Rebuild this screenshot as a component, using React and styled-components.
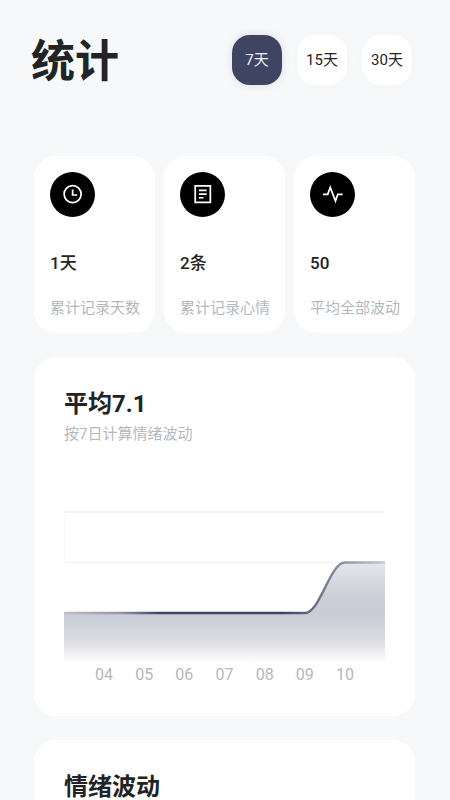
import React, { useState } from "react";
import styled, { createGlobalStyle } from "styled-components";

const ranges = [7, 15, 30];
const days = ["04", "05", "06", "07", "08", "09", "10"];

function ClockIcon() {
  return (
    <svg width="24" height="24" viewBox="0 0 24 24" aria-hidden="true">
      <circle cx="11.6" cy="11" r="9.3" />
      <path d="M11.6 6v6h5" />
    </svg>
  );
}

function NoteIcon() {
  return (
    <svg width="24" height="24" viewBox="0 0 24 24" aria-hidden="true">
      <path d="M3.5 2h16.5v18H3.5z" />
      <path d="M7.5 7h8.5M7.5 11h8.5M7.5 15h5" />
    </svg>
  );
}

function PulseIcon() {
  return (
    <svg width="24" height="24" viewBox="0 0 24 24" aria-hidden="true">
      <path d="M1 11.2h5.2L9 3.7l5.7 14.8L17.2 11.2H22.5" />
    </svg>
  );
}

const stats = [
  { icon: <ClockIcon />, value: "1天", label: "累计记录天数" },
  { icon: <NoteIcon />, value: "2条", label: "累计记录心情" },
  { icon: <PulseIcon />, value: "50", label: "平均全部波动" },
];

function MoodChart() {
  return (
    <ChartContainer>
      <svg viewBox="0 0 321 152" role="img" aria-label="情绪波动">
        <defs>
          <linearGradient id="area" x1="0" y1="51" x2="0" y2="152" gradientUnits="userSpaceOnUse">
            <stop offset="0" stopColor="#e6e7ea" />
            <stop offset="0.35" stopColor="#cccdd7" />
            <stop offset="0.5" stopColor="#c9ccd6" />
            <stop offset="0.62" stopColor="#cdd1d9" />
            <stop offset="0.8" stopColor="#dfe0e5" />
            <stop offset="1" stopColor="#ffffff" />
          </linearGradient>
          <linearGradient id="line" x1="0" y1="0" x2="321" y2="0" gradientUnits="userSpaceOnUse">
            <stop offset="0" stopColor="#bfc1c9" />
            <stop offset="0.18" stopColor="#8f93a5" />
            <stop offset="0.3" stopColor="#40435f" />
            <stop offset="0.68" stopColor="#40435f" />
            <stop offset="0.85" stopColor="#898b9f" />
            <stop offset="1" stopColor="#c6c7d0" />
          </linearGradient>
        </defs>
        <path d="M0 1H321" stroke="#f3f4f5" strokeWidth="2" />
        <path d="M0 51.5H321" stroke="#f1f1f3" />
        <path d="M0.5 1V51" stroke="#fafafa" />
        <path
          d="M0 102H241C256 102 266 51.5 281 51.5H321V152H0Z"
          fill="url(#area)"
        />
        <path
          d="M0 102H241C256 102 266 51.5 281 51.5H321"
          fill="none"
          stroke="url(#line)"
          strokeWidth="2.5"
        />
      </svg>
      <ol>
        {days.map((day) => (
          <li key={day}>{day}</li>
        ))}
      </ol>
    </ChartContainer>
  );
}

function App() {
  const [range, setRange] = useState(7);

  return (
    <Page>
      <GlobalStyle />
      <Header>
        <h1>统计</h1>
        <div className="ranges">
          {ranges.map((item) => (
            <RangeButton
              key={item}
              type="button"
              $active={item === range}
              aria-pressed={item === range}
              onClick={() => setRange(item)}
            >
              {item}天
            </RangeButton>
          ))}
        </div>
      </Header>
      <Main>
        <StatList>
          {stats.map((stat) => (
            <StatCard key={stat.label}>
              <div className="icon">{stat.icon}</div>
              <p className="value">{stat.value}</p>
              <p className="label">{stat.label}</p>
            </StatCard>
          ))}
        </StatList>
        <Panel>
          <h2>平均7.1</h2>
          <p>按7日计算情绪波动</p>
          <MoodChart />
        </Panel>
        <Panel>
          <h2>情绪波动</h2>
        </Panel>
      </Main>
    </Page>
  );
}

////////////////////////////////////////////Styled-Components
const GlobalStyle = createGlobalStyle`
  * {
    box-sizing: border-box;
  }

  html {
    scrollbar-width: none;
  }

  body {
    margin: 0;
    background-color: #f6f8fa;
    color: #222325;
    font-family: Roboto, "Noto Sans CJK SC", sans-serif;
  }

  h1, h2, p, ol, ul {
    margin: 0;
    padding: 0;
    list-style: none;
  }

  button {
    font-family: inherit;
  }
`;

const Page = styled.div`
  padding-bottom: 24px;
`;

const Header = styled.header`
  display: flex;
  align-items: center;
  justify-content: space-between;
  padding: 28px 38px 0 31px;

  h1 {
    padding-top: 4px;
    font-size: 44px;
    line-height: 60px;
    font-weight: 700;
  }

  .ranges {
    display: flex;
    gap: 15px;
  }
`;

const RangeButton = styled.button`
  width: 50px;
  height: 50px;
  padding: 0;
  border: none;
  border-radius: 18px;
  background-color: ${(props) => (props.$active ? "#404463" : "#fff")};
  color: ${(props) => (props.$active ? "#f1f1f5" : "#222325")};
  box-shadow: 0 0 8px
    ${(props) => (props.$active ? "rgba(64, 68, 99, 0.14)" : "rgba(64, 68, 99, 0.02)")};
  font-size: 15px;
  line-height: 24px;
  cursor: pointer;
`;

const Main = styled.main`
  display: flex;
  flex-direction: column;
  gap: 24px;
  padding: 64px 35px 0 34px;
`;

const StatList = styled.ul`
  display: grid;
  grid-template-columns: repeat(3, 1fr);
  gap: 9px;
`;

const StatCard = styled.li`
  padding: 16px 0 13px 16px;
  border-radius: 22px;
  background-color: #fff;
  white-space: nowrap;

  .icon {
    display: flex;
    align-items: center;
    justify-content: center;
    width: 45px;
    height: 45px;
    border-radius: 50%;
    background-color: #000;
  }

  svg {
    width: 22px;
    height: 22px;
    fill: none;
    stroke: #fff;
    stroke-width: 1.9;
  }

  .value {
    margin-top: 32px;
    font-size: 17px;
    line-height: 28px;
    font-weight: 500;
  }

  .label {
    margin-top: 19px;
    color: #b4b8bd;
    font-size: 15px;
    line-height: 24px;
  }
`;

const Panel = styled.section`
  padding: 29px 30px;
  border-radius: 22px;
  background-color: #fff;

  h2 {
    font-size: 24px;
    line-height: 36px;
    font-weight: 700;
  }

  p {
    color: #b4b8bd;
    font-size: 15px;
    line-height: 24px;
  }
`;

const ChartContainer = styled.div`
  margin-top: 65px;

  svg {
    display: block;
    width: 100%;
    height: auto;
  }

  ol {
    display: flex;
    padding: 0 20px;
  }

  li {
    flex: 1;
    color: #b4b8bd;
    font-size: 16px;
    line-height: 24px;
    text-align: center;
  }
`;

export default App;
